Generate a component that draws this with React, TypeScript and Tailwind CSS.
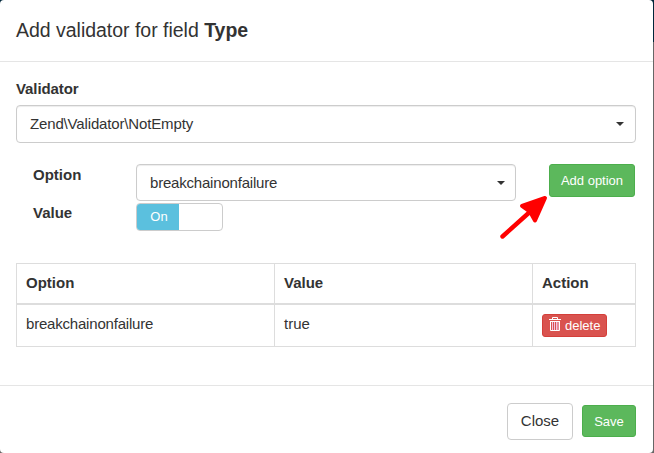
import React from 'react';

function Select({ value, className, textClass }: { value: string; className: string; textClass?: string }) {
  return (
    <button
      className={`flex items-center justify-between rounded-[4px] border border-[#cccccc] bg-white pl-[13px] text-left shadow-[inset_0_1px_1px_rgba(0,0,0,0.075)] ${className}`}
    >
      <span className={`tracking-[-0.2px] ${textClass ?? ''}`}>{value}</span>
      <span className="h-0 w-0 border-x-4 border-t-4 border-x-transparent border-t-[#333333]" />
    </button>
  );
}

function TrashIcon() {
  return (
    <svg width="12" height="14" viewBox="0 0 12 14" fill="none" className="shrink-0">
      <path d="M0 2.5h12M3.5 2V0.5h5V2" stroke="#fff" />
      <path d="M1.5 4v9.5h9V4" stroke="#fff" />
      <path d="M1.5 4.5h9" stroke="#fff" />
      <path d="M3.5 5v8M5.5 5v8M7.5 5v8M9 5v8" stroke="#f3c4e4" />
    </svg>
  );
}

export default function App() {
  return (
    <div className="relative h-[453px] w-[654px] overflow-hidden bg-[linear-gradient(#00263a_42px,#666666_42px)] font-['Liberation_Sans',Arial,sans-serif] text-[15px] leading-[21px] text-[#333333]">
      <div className="flex h-[453px] w-[653px] flex-col rounded-[4px] bg-white">
        <header className="h-[62px] shrink-0 border-b border-[#e5e5e5] px-4 pt-[19px]">
          <h4 className="text-[19.5px] leading-[22px] tracking-[-0.02px]">
            Add validator for field <b>Type</b>
          </h4>
        </header>

        <main className="h-[323px] shrink-0 pl-4 pr-[17px] pt-4">
          <label className="block h-[27px] font-bold tracking-[-0.1px]">Validator</label>
          <Select
            value={'Zend\\Validator\\NotEmpty'}
            className="h-[38px] w-full pr-[11px]"
            textClass="pb-[2px] tracking-[-0.15px]"
          />

          <div className="mt-[21px] flex h-[99px] items-start">
            <div className="w-[120px] pl-[17px] font-bold">
              <div className="h-[38px]">Option</div>
              <div>Value</div>
            </div>
            <div className="w-[380px]">
              <Select value="breakchainonfailure" className="h-[37px] w-full pr-[10px]" />
              <div className="mt-[2px] flex h-[28px] w-[87px] overflow-hidden rounded-[4px] border border-[#cccccc] text-[13px] leading-[26px]">
                <span className="w-[42px] bg-[#5bc0de] pl-[2px] text-center text-white">On</span>
              </div>
            </div>
            <button className="ml-[33px] h-[33px] w-[86px] rounded-[3px] border border-[#4cae4c] bg-[#5cb85c] text-[13px] text-white">
              Add option
            </button>
          </div>

          <table className="w-[620px] table-fixed border-separate border-spacing-0 border-l border-t border-[#dddddd] text-left">
            <colgroup>
              <col className="w-[258px]" />
              <col className="w-[258px]" />
              <col className="w-[103px]" />
            </colgroup>
            <thead>
              <tr className="h-[41px]">
                {['Option', 'Value', 'Action'].map((t) => (
                  <th key={t} className="border-b-2 border-r border-[#dddddd] px-[9px] pb-[2px] pt-0">
                    {t}
                  </th>
                ))}
              </tr>
            </thead>
            <tbody>
              <tr className="h-[42px]">
                <td className="border-b border-r border-[#dddddd] px-[9px] pb-[4px] tracking-[-0.2px]">
                  breakchainonfailure
                </td>
                <td className="border-b border-r border-[#dddddd] px-[9px] pb-[4px]">true</td>
                <td className="border-b border-r border-[#dddddd] px-[9px] py-0">
                  <button className="flex h-[23px] w-[65px] items-start gap-1 rounded-[3px] border border-[#d43f3a] bg-[#d9534f] pl-[6px] pt-[2px] text-[13px] leading-[18px] text-white">
                    <TrashIcon />
                    delete
                  </button>
                </td>
              </tr>
            </tbody>
          </table>
        </main>

        <footer className="flex h-[68px] shrink-0 items-start justify-end border-t border-[#e5e5e5] pr-[17px] pt-[17px]">
          <button className="h-[37px] w-[66px] rounded-[4px] border border-[#cccccc] bg-white pb-[2px]">Close</button>
          <button className="ml-[9px] mt-[2px] h-[32px] w-[54px] rounded-[3px] border border-[#4cae4c] bg-[#5cb85c] text-[13px] text-white">
            Save
          </button>
        </footer>
      </div>

      <svg className="pointer-events-none absolute left-[496px] top-[190px]" width="56" height="54" viewBox="0 0 56 54">
        <path d="M6.5 46.5L36 20" stroke="#ff0000" strokeWidth="4.4" strokeLinecap="round" />
        <path
          d="M49 8L26 15.8L34 21.5L39 30.5Z"
          fill="#ff0000"
          stroke="#ff0000"
          strokeWidth="4"
          strokeLinejoin="round"
        />
      </svg>
    </div>
  );
}
